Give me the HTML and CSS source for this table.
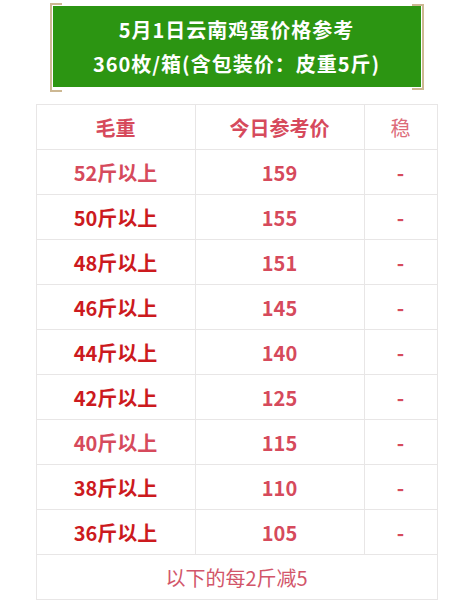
FILE: index.html
```html
<!DOCTYPE html>
<html lang="zh-CN">
<head>
<meta charset="utf-8">
<link rel="stylesheet" href="styles.css">
</head>
<body>
<div class="page">
  <div class="banner-wrap">
    <div class="banner">
      <div class="line">5月1日云南鸡蛋价格参考</div>
      <div class="line">360枚/箱(含包装价：皮重5斤)</div>
    </div>
  </div>
  <table class="price">
    <colgroup><col class="c1"><col class="c2"><col class="c3"></colgroup>
    <thead>
      <tr><th>毛重</th><th>今日参考价</th><th class="light">稳</th></tr>
    </thead>
    <tbody>
      <tr><td class="pink">52斤以上</td><td>159</td><td>-</td></tr>
      <tr><td class="red">50斤以上</td><td>155</td><td>-</td></tr>
      <tr><td class="red">48斤以上</td><td>151</td><td>-</td></tr>
      <tr><td class="red">46斤以上</td><td>145</td><td>-</td></tr>
      <tr><td class="red">44斤以上</td><td>140</td><td>-</td></tr>
      <tr><td class="red">42斤以上</td><td>125</td><td>-</td></tr>
      <tr><td class="pink">40斤以上</td><td>115</td><td>-</td></tr>
      <tr><td class="red">38斤以上</td><td>110</td><td>-</td></tr>
      <tr><td class="red">36斤以上</td><td>105</td><td>-</td></tr>
      <tr><td class="foot" colspan="3">以下的每2斤减5</td></tr>
    </tbody>
  </table>
</div>
</body>
</html>
```
FILE: styles.css
```css
html, body {
  margin: 0;
  padding: 0;
  background: #ffffff;
}
body {
  font-family: "Noto Sans CJK SC", "Noto Sans", sans-serif;
}
.page {
  padding-top: 3px;
}
.banner-wrap {
  position: relative;
  width: 374px;
  margin: 0 auto;
  padding: 3px 3px 5px 3px;
  box-sizing: border-box;
}
.banner-wrap::before,
.banner-wrap::after {
  content: "";
  position: absolute;
  top: 0;
  bottom: 0;
  width: 10px;
  border: 2px solid #cdb893;
}
.banner-wrap::before {
  left: 0;
  border-right: none;
}
.banner-wrap::after {
  right: 0;
  border-left: none;
  top: 1px;
  bottom: 2px;
}
.banner {
  background: #2c9512;
  height: 81px;
  color: #ffffff;
  font-weight: 700;
  font-size: 20px;
  display: flex;
  flex-direction: column;
  align-items: center;
  justify-content: center;
  letter-spacing: 1px;
}
.banner .line {
  line-height: 34px;
}
.price {
  margin: 12px auto 0;
  width: 401px;
  border-collapse: collapse;
  table-layout: fixed;
}
.c1 { width: 159px; }
.c2 { width: 169px; }
.c3 { width: 73px; }
.price th,
.price td {
  border: 1px solid #e8e6e6;
  height: 44px;
  padding: 0;
  text-align: center;
  font-size: 20px;
  font-weight: 700;
  color: #d64a5c;
}
.price th.light {
  font-weight: 400;
  color: #dc6c7a;
}
.price td.red {
  color: #cc1a1e;
}
.price td.pink {
  color: #d64a5c;
}
.price td.foot {
  font-weight: 400;
  color: #d2566a;
}
```
